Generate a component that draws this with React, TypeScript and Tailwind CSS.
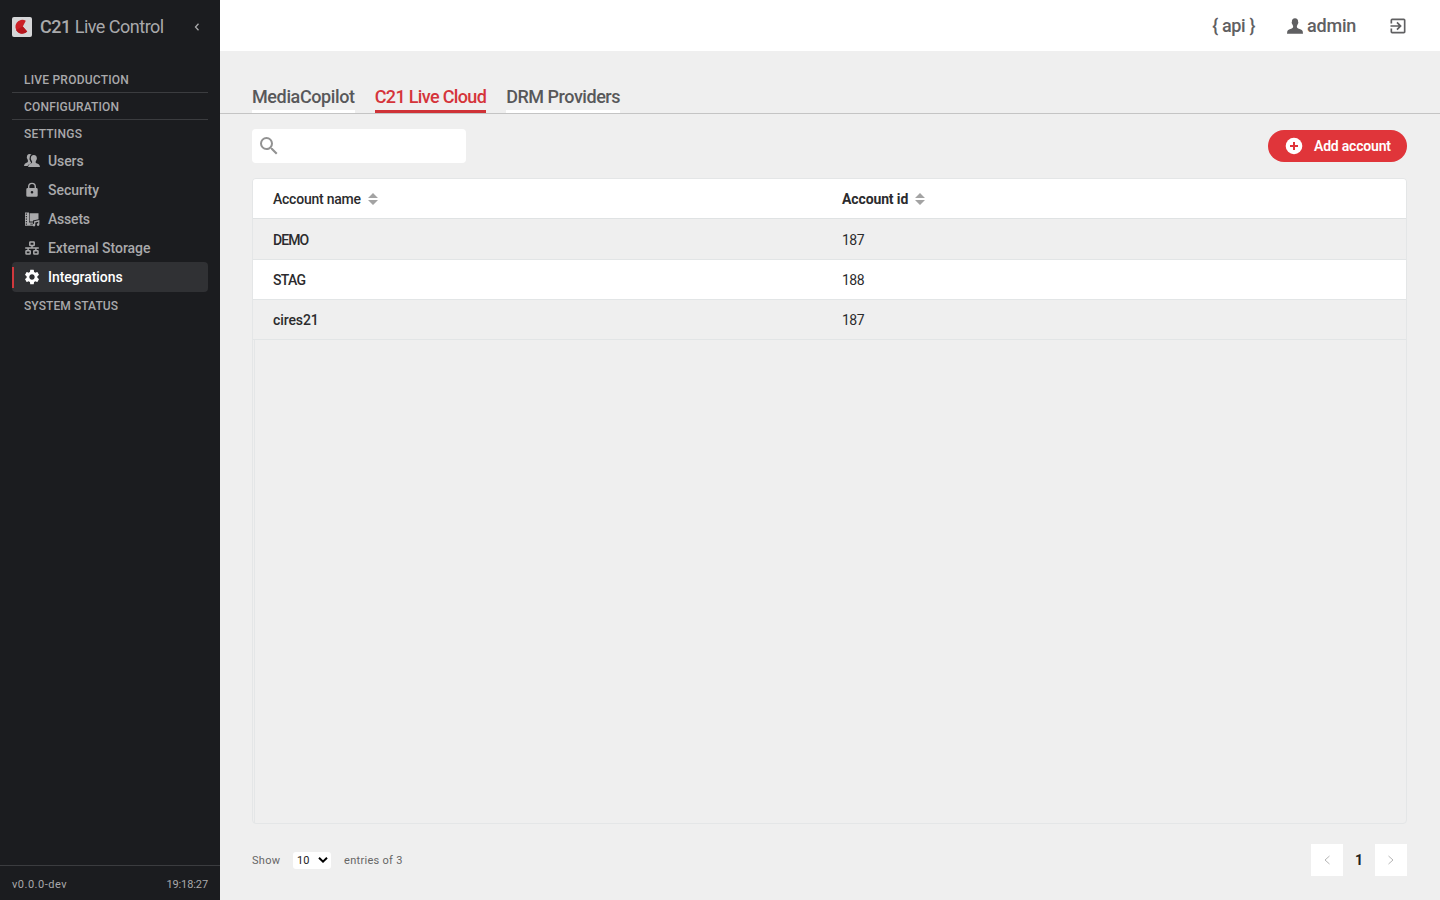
import React from 'react'
import { MdExitToApp, MdSearch, MdSettings } from 'react-icons/md'

interface IconProps {
  className?: string
}

interface Account {
  name: string
  id: number
  tracking: string
}

interface NavItem {
  label: string
  tracking: string
  icon: React.FC<IconProps>
  active?: boolean
}

const PersonIcon: React.FC<IconProps> = ({ className }) => (
  <svg viewBox="0 0 16 16" className={className} fill="currentColor">
    <path d="M8 .2C5.900.2 4.800 1.700 4.900 3.700c-.3.500-.3.800-.2 1.400.1.600.5.700.6 1.100.2.900.7 1.400.8 1.900.1 1.400-.1 2-1.300 2.500C3 11.300.8 11.800.3 13.300L0 15.700h16l-.3-2.400c-.5-1.500-2.700-2-4.500-2.700-1.200-.5-1.400-1.100-1.300-2.500.1-.5.600-1 .8-1.900.1-.4.500-.5.600-1.100.1-.6.1-.9-.2-1.400C11.200 1.700 10.100.2 8 .2z" />
  </svg>
)

const UsersIcon: React.FC<IconProps> = ({ className }) => (
  <svg viewBox="0 0 16 16" className={className} fill="currentColor">
    <path d="M5.500 1C3.700 1 2.800 2.300 2.900 4.200c-.3.400 0 1.200.4 1.500.2.900.6 1.300.7 2.200 0 .9-.3 1.300-1.500 1.800C1.200 10.300.3 10.800 0 13h3.600c.6-1.500 1.800-2 3.100-2.500.5-.3.6-.8.3-1.300-.5-.5-.8-1.100-1-1.800-.6-.9-.6-1.700-.3-2.300C5.700 3.300 6.400 2 7.600 1.600 7 1.200 6.300 1 5.500 1z" />
    <path d="M9.800 2C7.800 2 6.700 3.400 6.900 5.300c-.3.400 0 1.300.4 1.600.2.800.6 1.200.8 1.800.1 1-.3 1.300-1.300 1.700C5.300 11 4.300 11.800 4.100 14H16c-.3-2.300-1.400-2.900-2.900-3.500-1.200-.5-1.600-.8-1.500-1.800.2-.6.6-1 .8-1.800.400-.3.700-1.200.4-1.600C13 3.400 11.800 2 9.800 2z" />
  </svg>
)

const LockIcon: React.FC<IconProps> = ({ className }) => (
  <svg viewBox="0 0 16 16" className={className}>
    <path d="M4.700 7V4.700a3.300 3.300 0 0 1 6.600 0V7" fill="none" stroke="currentColor" strokeWidth="1.400" />
    <path
      fill="currentColor"
      fillRule="evenodd"
      d="M3.700 6h8.600a1.400 1.400 0 0 1 1.400 1.400v6a1.400 1.400 0 0 1-1.400 1.400H3.700a1.400 1.400 0 0 1-1.400-1.400v-6A1.400 1.400 0 0 1 3.700 6zM8 9a1.300 1.300 0 1 0 0 2.600A1.300 1.300 0 0 0 8 9z"
    />
  </svg>
)

const AssetsIcon: React.FC<IconProps> = ({ className }) => (
  <svg viewBox="0 0 16 16" className={className} fill="currentColor">
    <path
      fillRule="evenodd"
      d="M1 1.500h4v13.300H1zM1.800 2.500v1.200h1.100V2.500zm0 2.500v1.200h1.100V5zm0 2.500v1.200h1.100V7.500zm0 2.500v1.200h1.100V10zm0 2.500v1.200h1.100v-1.200z"
    />
    <path d="M5.600 2.200H14.500v6l-5.500 1.200v1.100H5.600z" />
    <path d="M5 11.600h4v1.100H6.300v.8H9v1.300H5z" />
    <path d="M10.100 10.300 15.400 9.100v4.500a1.300 1.300 0 1 1-1.200-1.300v-1.500l-2.900.7v2.600a1.300 1.300 0 1 1-1.200-1.300z" />
  </svg>
)

const StorageIcon: React.FC<IconProps> = ({ className }) => (
  <svg viewBox="0 0 16 16" className={className} fill="none" stroke="currentColor" strokeWidth="1.500">
    <rect x="5.800" y="2" width="4.400" height="3.400" rx=".5" />
    <rect x="2" y="10.700" width="4.200" height="3.400" rx=".5" />
    <rect x="9.800" y="10.700" width="4.200" height="3.400" rx=".5" />
    <path d="M8 5.400V8M1.200 8h13.600M4.100 8v2.700M11.900 8v2.700" />
  </svg>
)

const GearIcon: React.FC<IconProps> = ({ className }) => (
  <span className={className}>
    <MdSettings className="-m-px h-[18px] w-[18px]" />
  </span>
)

const AddIcon: React.FC<IconProps> = ({ className }) => (
  <svg viewBox="0 0 20 20" className={className}>
    <circle cx="10" cy="10" r="8.300" fill="currentColor" />
    <path d="M10 6v8M6 10h8" stroke="#e0353a" strokeWidth="2" />
  </svg>
)

const LogoIcon: React.FC<IconProps> = ({ className }) => (
  <svg viewBox="0 0 20 20" className={className}>
    <rect width="20" height="20" rx="2" fill="#d6d6d8" />
    <path d="M13.800 3.700 10.800 9.500 15.200 14.500A6.900 6.900 0 1 1 13.800 3.700z" fill="#cb2027" />
    <path d="M10.800 9.500 15.200 14.500A6.900 6.900 0 0 1 4 13z" fill="#b5161d" />
  </svg>
)

const SortIcon: React.FC = () => (
  <svg viewBox="0 0 10 12" className="h-3 w-2.5" fill="#a3a3a3">
    <path d="M5 0l5 5H0zM5 12l5-5H0z" />
  </svg>
)

const navItems: NavItem[] = [
  { label: 'Users', tracking: 'tracking-[-0.1px]', icon: UsersIcon },
  { label: 'Security', tracking: 'tracking-[0px]', icon: LockIcon },
  { label: 'Assets', tracking: 'tracking-[-0.2px]', icon: AssetsIcon },
  { label: 'External Storage', tracking: 'tracking-[-0.04px]', icon: StorageIcon },
  { label: 'Integrations', tracking: 'tracking-[-0.06px]', icon: GearIcon, active: true },
]

const accounts: Account[] = [
  { name: 'DEMO', id: 187, tracking: 'tracking-[-0.9px]' },
  { name: 'STAG', id: 188, tracking: 'tracking-[-0.7px]' },
  { name: 'cires21', id: 187, tracking: 'tracking-[-0.1px]' },
]

const Sidebar: React.FC = () => {
  return (
    <aside className="flex w-[220px] shrink-0 flex-col bg-[#1b1c1f] text-[#a9a9ab]">
      <div className="flex h-[66px] items-start px-3 pt-[17px]">
        <LogoIcon className="h-5 w-5" />
        <h1 className="ml-2 text-[18px] leading-5 tracking-[-0.5px] whitespace-nowrap">
          <span className="font-medium">C21</span> Live Control
        </h1>
        <svg viewBox="0 0 6 8" className="mt-1.5 mr-2 ml-auto h-2 w-1.5" fill="none" stroke="currentColor" strokeWidth="1.3">
          <path d="M4.500.8 1.500 4l3 3.200" />
        </svg>
      </div>

      <nav className="flex flex-1 flex-col px-3">
        <p className="h-[27px] border-b border-[#3b3c3f] px-3 text-xs leading-[29px] font-medium tracking-[0.22px]">LIVE PRODUCTION</p>
        <p className="h-[27px] border-b border-[#3b3c3f] px-3 text-xs leading-[29px] font-medium tracking-[0.18px]">CONFIGURATION</p>
        <p className="h-[26px] px-3 text-xs leading-[29px] font-medium tracking-[0.24px]">SETTINGS</p>
        {navItems.map(({ label, tracking, icon: Icon, active }) => (
          <a
            key={label}
            className={
              active
                ? 'flex h-[30px] items-center rounded bg-[#303134] text-white'
                : 'flex h-[29px] items-center'
            }
          >
            <span className={active ? 'h-[21px] w-0.5 bg-[#d0383d]' : 'h-[21px] w-0.5'} />
            <Icon className="ml-2.5 h-4 w-4" />
            <span className={`ml-2 text-sm font-medium whitespace-nowrap ${tracking}`}>{label}</span>
          </a>
        ))}
        <p className="h-[27px] px-3 text-xs leading-[29px] font-medium tracking-[0.08px]">SYSTEM STATUS</p>
      </nav>

      <div className="flex h-[35px] items-center justify-between border-t border-[#3b3c3f] px-3 pt-1 text-[11px]">
        <span className="tracking-[0.5px]">v0.0.0-dev</span>
        <span className="tracking-[-0.1px]">19:18:27</span>
      </div>
    </aside>
  )
}

const Header: React.FC = () => {
  return (
    <header className="flex h-[51px] items-center justify-end bg-white pr-8 text-[18px] font-medium text-[#606062]">
      <span className="tracking-[-0.35px]">{'{ api }'}</span>
      <PersonIcon className="ml-8 h-4 w-4" />
      <span className="ml-1 tracking-[-0.25px]">admin</span>
      <MdExitToApp className="ml-8 h-5 w-5" />
    </header>
  )
}

const Tabs: React.FC = () => {
  return (
    <div className="flex h-[63px] items-end gap-5 border-b border-[#c4c4c4] px-8 text-[18px] font-medium text-[#58585a]">
      <a className="h-[30px] border-b-[3px] border-white leading-[28px] tracking-[-0.38px]">MediaCopilot</a>
      <a className="h-[30px] border-b-[3px] border-[#cf3237] leading-[28px] tracking-[-0.66px] text-[#d5343a]">C21 Live Cloud</a>
      <a className="h-[30px] border-b-[3px] border-white leading-[28px] tracking-[-0.46px]">DRM Providers</a>
    </div>
  )
}

const AccountsTable: React.FC = () => {
  return (
    <div className="flex h-[646px] flex-col rounded border border-[#e4e6e7] text-sm font-medium text-[#2b2b2d]">
      <div className="flex h-10 shrink-0 items-center rounded-t-[3px] border-b border-[#dfe2e3] bg-white pl-5">
        <div className="flex w-[569px] items-center gap-[7px]">
          <span className="tracking-[-0.24px]">Account name</span>
          <SortIcon />
        </div>
        <div className="flex items-center gap-[7px]">
          <span className="font-bold tracking-[-0.12px]">Account id</span>
          <SortIcon />
        </div>
      </div>
      {accounts.map((account, i) => (
        <div
          key={account.name}
          className={`flex shrink-0 items-center border-b border-[#e2e5e6] pl-5 ${i === 0 ? 'h-[41px] pt-px' : 'h-10'} ${i % 2 ? 'bg-white' : ''}`}
        >
          <span className={`w-[569px] ${account.tracking}`}>{account.name}</span>
          <span className="font-normal tracking-[-0.5px]">{account.id}</span>
        </div>
      ))}
      <div className="ml-px flex-1 border-l border-[#e4e6e7]" />
    </div>
  )
}

const Pagination: React.FC = () => {
  return (
    <div className="mt-5 flex h-8 items-center text-[11px] text-[#666]">
      <span className="w-[29px] pt-[3px] tracking-[0.3px]">Show</span>
      <div className="ml-3 flex h-[17px] w-[38px] items-center justify-between rounded-[3px] bg-white pr-[3px] pl-1 text-[#222]">
        <span className="pt-[3px]">10</span>
        <svg viewBox="0 0 10 8" className="h-2 w-2.5" fill="none" stroke="#000" strokeWidth="2">
          <path d="M1 1.800 5 5.600l4-3.800" />
        </svg>
      </div>
      <span className="ml-[13px] pt-[3px] tracking-[0.3px]">entries of 3</span>
      <div className="ml-auto flex items-center">
        <button className="flex h-8 w-8 items-center justify-center bg-white">
          <svg viewBox="0 0 6 10" className="h-2.5 w-1.5" fill="none" stroke="#b5b5b5">
            <path d="M5.500 1 1 5l4.500 4" />
          </svg>
        </button>
        <span className="w-8 text-center text-sm font-bold text-[#222]">1</span>
        <button className="flex h-8 w-8 items-center justify-center bg-white">
          <svg viewBox="0 0 6 10" className="h-2.5 w-1.5" fill="none" stroke="#b5b5b5">
            <path d="M.5 1 5 5 .5 9" />
          </svg>
        </button>
      </div>
    </div>
  )
}

const App: React.FC = () => {
  return (
    <div className="flex h-screen w-full overflow-hidden bg-[#efefef] font-[Roboto,sans-serif]">
      <Sidebar />
      <main className="flex min-w-0 flex-1 flex-col">
        <Header />
        <Tabs />
        <section className="flex flex-col pr-[33px] pl-8">
          <div className="mt-[15px] mb-[15px] flex h-[34px] items-center justify-between">
            <label className="flex h-[34px] w-[214px] items-center rounded bg-white pl-[5px] text-[#929292]">
              <MdSearch className="h-6 w-6" />
            </label>
            <button className="flex h-8 w-[139px] items-center rounded-full bg-[#e0353a] pl-4 text-sm font-semibold text-white">
              <AddIcon className="h-5 w-5" />
              <span className="ml-2.5 tracking-[-0.2px] whitespace-nowrap">Add account</span>
            </button>
          </div>
          <AccountsTable />
          <Pagination />
        </section>
      </main>
    </div>
  )
}

export default App
